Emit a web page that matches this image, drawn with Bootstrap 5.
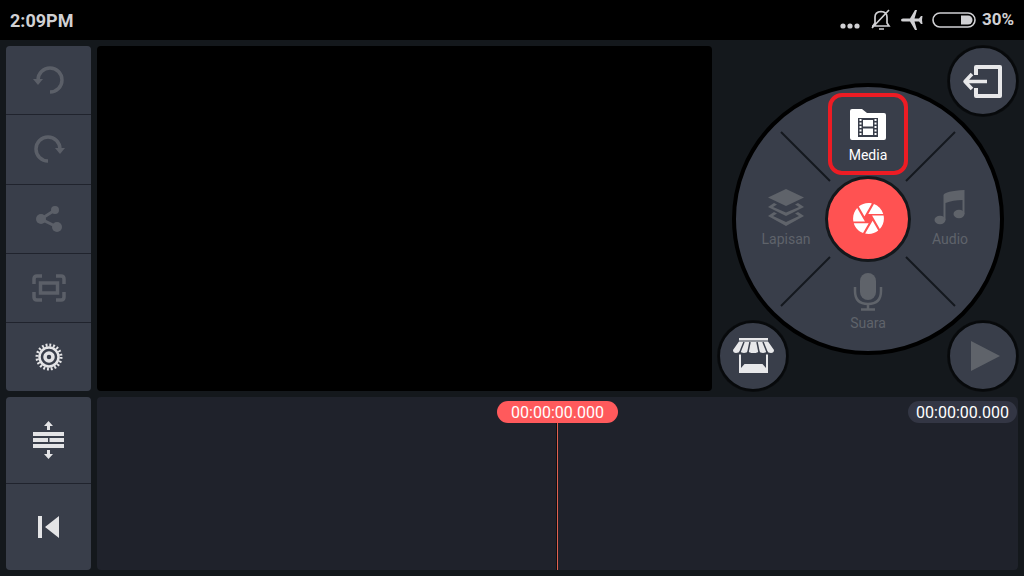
<!DOCTYPE html>
<html lang="id">
<head>
<meta charset="utf-8">
<meta name="viewport" content="width=device-width, initial-scale=1">
<title>Video editor</title>
<link href="https://cdn.jsdelivr.net/npm/bootstrap@5.3.0/dist/css/bootstrap.min.css" rel="stylesheet">
<style>
  body { background: #14181c; color: #fff; font-family: Roboto, sans-serif; }
  svg { display: block; }
  .status { height: 40px; padding: 0 10px; background: #000; color: #d0d0d3; font-size: 18px; font-weight: 700; }
  .status .indicators { gap: 6px; }
  .status .level { font-size: 17px; }
  .editor { display: grid; grid-template-columns: 85px minmax(0, 1fr) 300px; grid-template-rows: minmax(345px, 2fr) minmax(172px, 1fr); gap: 6px; padding: 6px; }
  .tools { gap: 1px; background: #20232d; border-radius: 4px; overflow: hidden; }
  .tool { flex: 1 1 0; display: grid; place-items: center; border: 0; padding: 0; background: #393e4a; color: #e4e4e6; }
  .tool:disabled { color: #5b5f68; }
  .preview { background: #000; border-radius: 4px; }
  .panel { display: grid; place-items: center; }
  .panel > * { grid-area: 1 / 1; }
  .corner { width: 70px; height: 70px; display: grid; place-items: center; padding: 0; border: 2px solid #07090b; box-shadow: 0 0 0 1px #0a0c0e; border-radius: 50%; background: #393e4a; color: #e8e8ea; z-index: 1; }
  .corner:disabled, .option:disabled { color: #5f636a; }
  .wheel { width: 272px; height: 272px; border: 4px solid #000; border-radius: 50%; background: #393e4a; display: grid; grid-template: repeat(3, 1fr) / repeat(3, 1fr); padding: 6px 9px; place-items: center; }
  .spokes { inset: 0; }
  .option { display: flex; flex-direction: column; align-items: center; justify-content: center; gap: 3px; border: 0; padding: 0; background: none; color: #fff; font-size: 14px; line-height: 18px; z-index: 1; }
  .option.chosen { width: 80px; height: 82px; gap: 4px; padding-top: 4px; border: 4px solid #ed1c24; border-radius: 14px; align-self: start; }
  .shutter { width: 86px; height: 86px; margin: -2px; display: grid; place-items: center; padding: 0; border: 3px solid #14181c; border-radius: 50%; background: #ff5252; color: #fff; }
  .timeline { grid-column: 2 / 4; background: #1f222b; border-radius: 4px; }
  .timecode { height: 22px; border-radius: 11px; font-size: 16px; line-height: 24px; text-align: center; }
  .timecode.now { width: 121px; background: #ff5a5c; }
  .timecode.total { width: 109px; background: #333644; top: 4px; right: 1px; }
  .playhead { padding-top: 4px; }
  .playhead .stem { width: 1px; background: #e0604f; box-shadow: -1px 0 0 #0d0f13; }
</style>
</head>
<body class="min-vh-100 d-flex flex-column">
<header class="status d-flex align-items-center justify-content-between">
  <span>2:09PM</span>
  <div class="indicators d-flex align-items-center">
    <svg width="24" height="24" fill="currentColor"><circle cx="3" cy="18" r="2.6"/><circle cx="10" cy="18" r="2.6"/><circle cx="17" cy="18" r="2.6"/></svg>
    <svg width="24" height="24" fill="none" stroke="currentColor" stroke-width="1.7"><path d="M2 18H19L17 15V9Q17 4 11 3.500Q5 4 5 9V15L3 18M9 21H14M2 20L19 2"/></svg>
    <svg width="26" height="24" fill="currentColor"><path d="M1 12Q1 10.500 3 10.500H10L15 2H17L14.500 10.500H19L21 8H22.500L22 12L22.500 16H21L19 13.500H14.500L17 22H15L10 13.500H3Q1 13.500 1 12Z"/></svg>
    <svg width="44" height="18"><rect x="1" y="2" width="42" height="14" rx="7" fill="none" stroke="currentColor" stroke-width="1.6"/><path d="M29 4.500H36A4.500 4.500 0 0 1 36 13.500H29Z" fill="currentColor"/></svg>
    <span class="level">30%</span>
  </div>
</header>

<main class="editor flex-grow-1">
  <div class="tools d-flex flex-column">
    <button class="tool" disabled aria-label="Undo"><svg width="34" height="32" fill="none" stroke="currentColor" stroke-width="3.500"><path d="M6 16A12 12 0 1 1 18 28"/><path d="M1 15H11L6 21Z" fill="currentColor" stroke="none"/></svg></button>
    <button class="tool" disabled aria-label="Redo"><svg width="34" height="32" fill="none" stroke="currentColor" stroke-width="3.500"><path d="M28 16A12 12 0 1 0 16 28"/><path d="M23 15H33L28 21Z" fill="currentColor" stroke="none"/></svg></button>
    <button class="tool" disabled aria-label="Share"><svg width="28" height="28" fill="currentColor"><path d="M20 5L6 14L22 22" fill="none" stroke="currentColor" stroke-width="3"/><circle cx="20" cy="5" r="4"/><circle cx="6" cy="14" r="5"/><circle cx="22" cy="22" r="5"/></svg></button>
    <button class="tool" disabled aria-label="Capture frame"><svg width="34" height="28" fill="none" stroke="currentColor" stroke-width="3.500"><path d="M2 10V5Q2 2 5 2H10M24 2H29Q32 2 32 5V10M32 18V23Q32 26 29 26H24M10 26H5Q2 26 2 23V18M8.500 9H25.500V19H8.500Z"/></svg></button>
    <button class="tool" aria-label="Settings"><svg width="28" height="28" viewBox="-14 -14 28 28" fill="none" stroke="currentColor"><circle r="9.500" stroke-width="2.500"/><circle r="12" stroke-width="3" stroke-dasharray="1.880 1.890"/><circle r="4" stroke-width="3.500"/></svg></button>
  </div>

  <section class="preview" aria-label="Preview"></section>

  <section class="panel">
    <div class="wheel position-relative">
      <svg class="spokes position-absolute w-100 h-100" viewBox="-132 -132 264 264" stroke="#14181e" stroke-width="2"><path d="M-87-87L-38-38M87-87L38-38M-87 87L-38 38M87 87L38 38"/></svg>
      <span></span>
      <button class="option chosen"><svg width="38" height="34"><path d="M1 3Q1 1 3 1H13L18 5H35Q37 5 37 7V30Q37 32 35 32H3Q1 32 1 30Z" fill="#fff"/><path d="M9 10H29V29H9Z" fill="#393e4a"/><path d="M14 12H24V18.500H14ZM14 20.500H24V27H14Z" fill="#fff"/><path d="M11.500 11V28M26.500 11V28" stroke="#fff" stroke-width="2" stroke-dasharray="2 1.500"/></svg>Media</button>
      <span></span>
      <button class="option" disabled><svg width="38" height="38" fill="currentColor"><path d="M19 0L37 8.500L19 17L1 8.500Z"/><path fill-rule="evenodd" d="M7 14L1 18L19 27L37 18L31 14L28 15.500L32 18L19 23.500L6 18L10 15.500ZM7 23L1 27L19 37L37 27L31 23L28 24.500L32 27L19 33L6 27L10 24.500Z"/></svg>Lapisan</button>
      <button class="shutter" aria-label="Camera"><svg width="37" height="37" viewBox="0 0 24 24" fill="currentColor"><path d="M9.400 10.500l4.770-8.260C13.470 2.090 12.750 2 12 2c-2.400 0-4.600.850-6.320 2.250l3.660 6.350.060-.100zM21.540 9c-.920-2.920-3.150-5.260-6-6.340L11.880 9h9.660zm.260 1h-7.490l.290.500 4.760 8.250C21 16.970 22 14.610 22 12c0-.690-.070-1.350-.200-2zM8.540 12l-3.900-6.750C3.010 7.030 2 9.390 2 12c0 .690.070 1.350.200 2h7.490l-1.150-2zm-6.080 3c.920 2.920 3.150 5.260 6 6.340L12.120 15H2.460zm11.270 0l-3.900 6.760c.700.150 1.420.240 2.170.240 2.400 0 4.600-.850 6.320-2.250l-3.660-6.350-.930 1.600z"/></svg></button>
      <button class="option" disabled><svg width="34" height="38" fill="currentColor"><ellipse cx="7" cy="31" rx="5.500" ry="4.200"/><ellipse cx="26" cy="25" rx="5.500" ry="4.200"/><path d="M10.500 6Q12 2 31.500 1V25H29.500V11Q20 11 12.500 14V31H10.500Z"/></svg>Audio</button>
      <span></span>
      <button class="option" disabled><svg width="30" height="38" fill="currentColor"><rect x="7" y="0" width="16" height="27" rx="8"/><path d="M2 14V18Q2 31 15 31Q28 31 28 18V14M15 31V37M8 36.500H22" fill="none" stroke="currentColor" stroke-width="2.500"/></svg>Suara</button>
      <span></span>
    </div>
    <button class="corner align-self-start ms-auto" aria-label="Exit"><svg width="44" height="34" fill="none" stroke="currentColor" stroke-width="4" stroke-linejoin="round"><path d="M15 11V3H39V32H15V24"/><path d="M26 17.500H4M11 10L4 17.500L11 25" stroke-width="3.500"/></svg></button>
    <button class="corner align-self-end me-auto" aria-label="Store"><svg width="42" height="38" fill="currentColor"><path d="M7 1H36V3.500H7ZM7 4.500H36L42 13Q42 16 39 16Q36 16 35 14Q34 16 31 16Q28 16 27 14Q26 16 21.500 16Q17 16 16 14Q15 16 12 16Q9 16 8 14Q7 16 4 16Q1 16 1 13Z"/><path d="M12 5L8 15M18 5L16 15M25 5L27 15M31 5L35 15" stroke="#393e4a" stroke-width="1.500"/><path d="M7 17.500H9V31L12.500 27H30.500L34 31V17.500H36V36H7Z"/></svg></button>
    <button class="corner align-self-end ms-auto" disabled aria-label="Play"><svg width="34" height="32" fill="currentColor"><path d="M5 1L34 16L5 31Z"/></svg></button>
  </section>

  <div class="tools d-flex flex-column">
    <button class="tool" aria-label="Resize tracks"><svg width="32" height="38" fill="currentColor"><path d="M0 11H31V15H0ZM0 17H15V21H0ZM16.500 17H31V21H16.500ZM0 23H31V27H0ZM15.500 0L20 5H17V9H14V5H11ZM15.500 38L20 33H17V29H14V33H11Z"/></svg></button>
    <button class="tool" aria-label="Jump to start"><svg width="22" height="24" fill="currentColor"><path d="M0 1H4V23H0ZM21 1V23L7 12Z"/></svg></button>
  </div>

  <section class="timeline position-relative d-flex" aria-label="Timeline">
    <div class="playhead d-flex flex-column align-items-center mx-auto">
      <div class="timecode now">00:00:00.000</div>
      <div class="stem flex-grow-1"></div>
    </div>
    <div class="timecode total position-absolute">00:00:00.000</div>
  </section>
</main>
<script src="https://cdn.jsdelivr.net/npm/bootstrap@5.3.0/dist/js/bootstrap.bundle.min.js"></script>
</body>
</html>
